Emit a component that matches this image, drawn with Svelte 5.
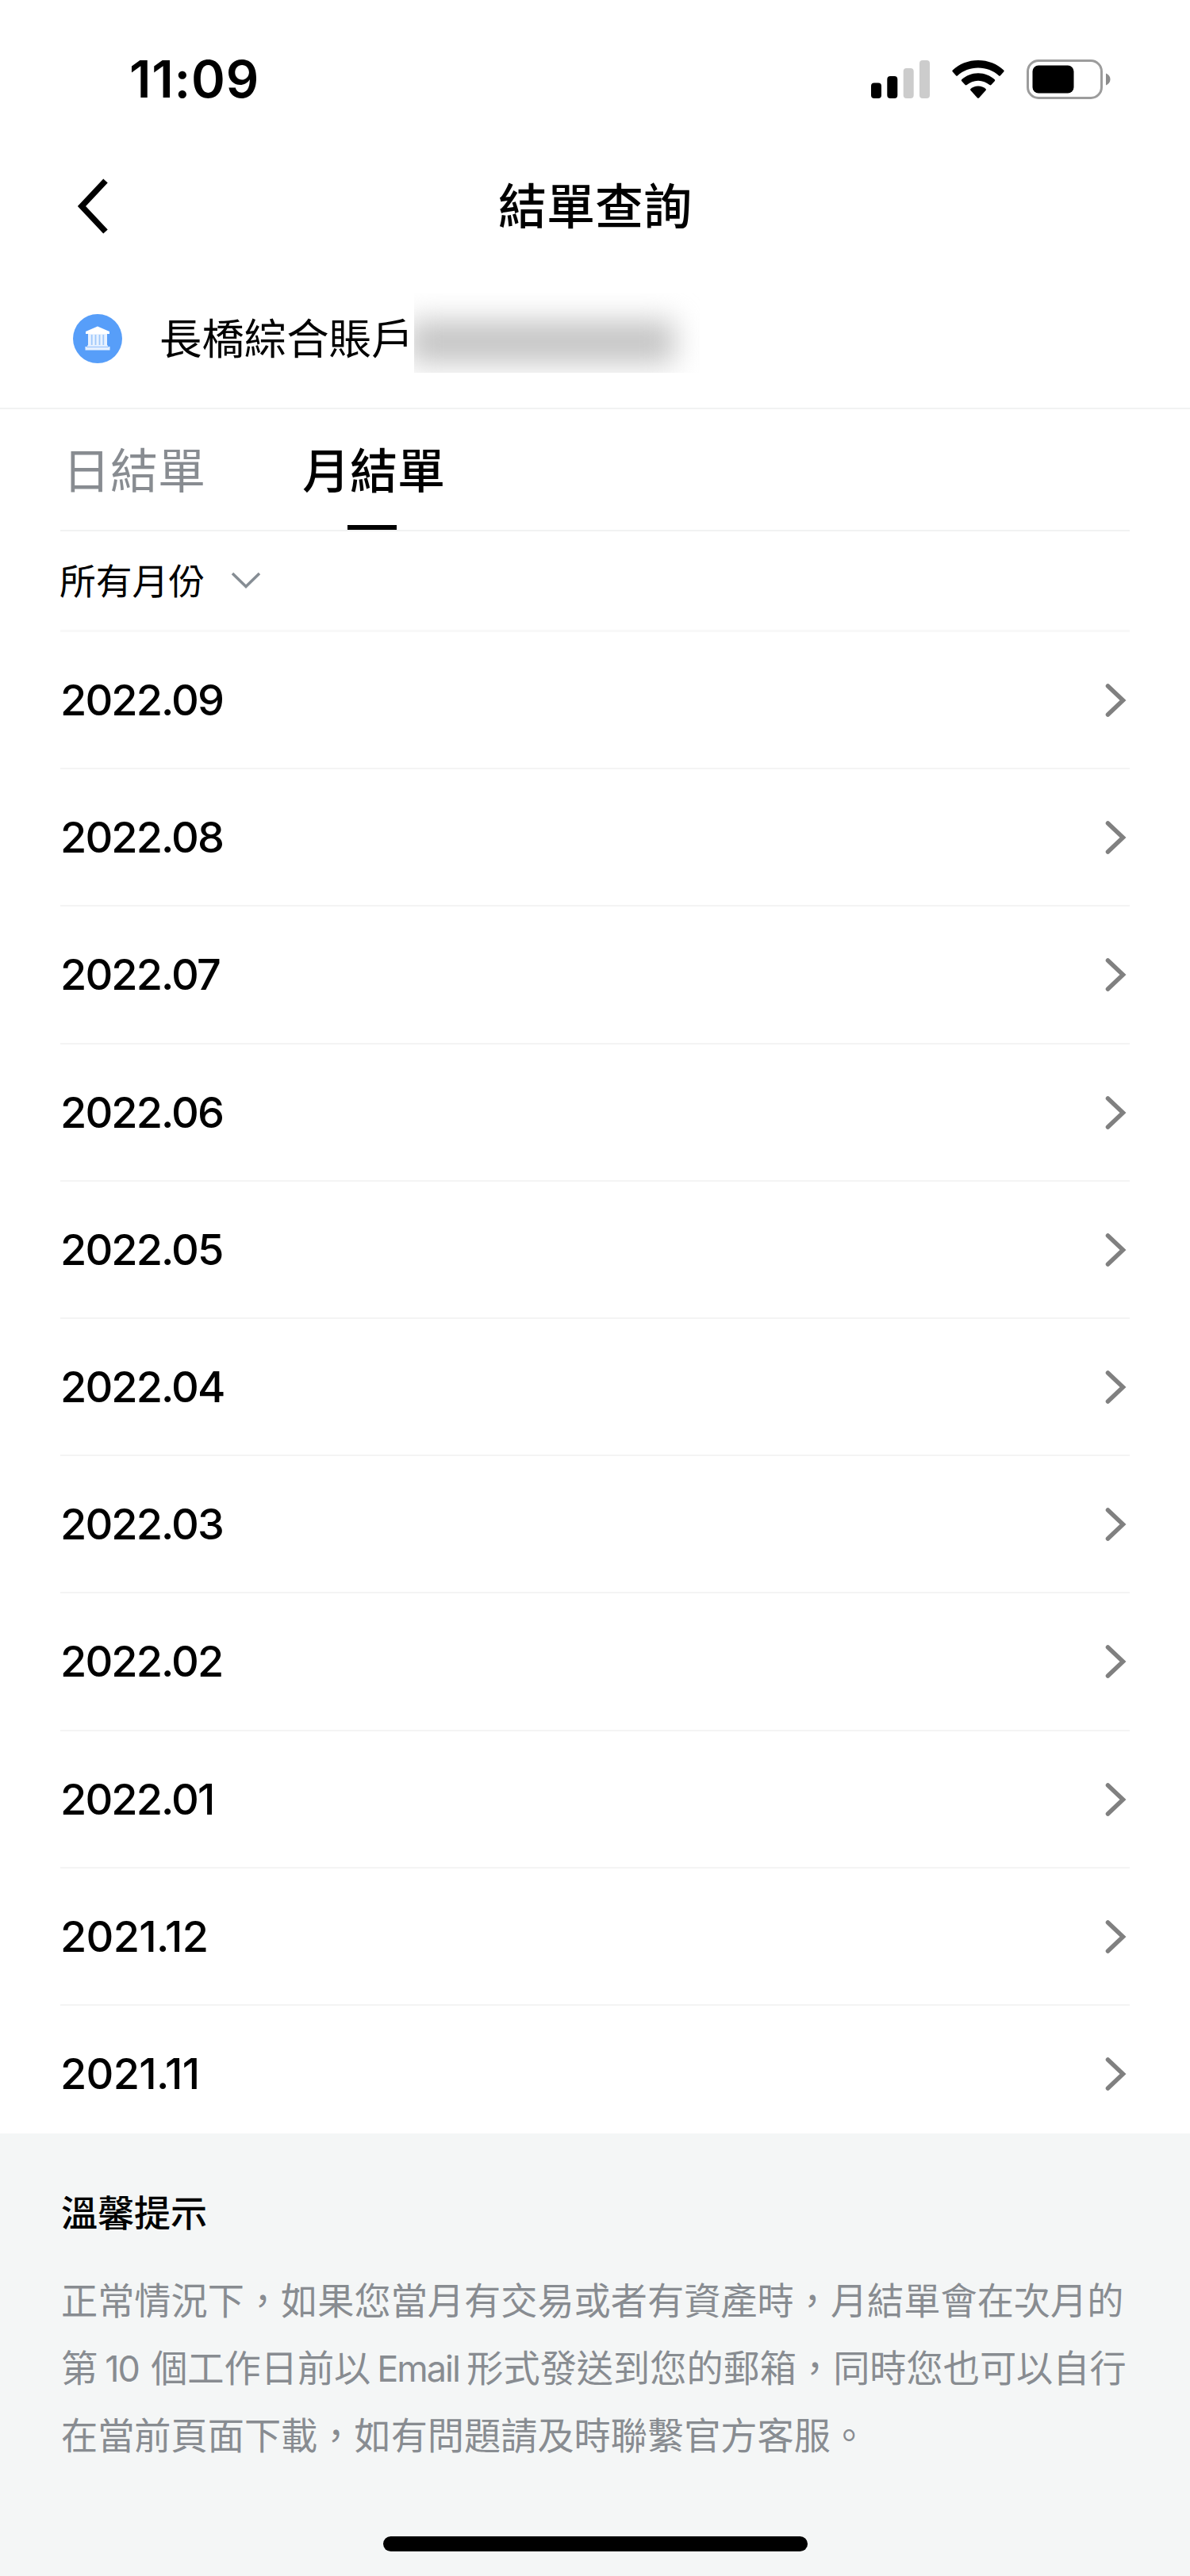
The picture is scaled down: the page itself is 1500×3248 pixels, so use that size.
<script>
  const months = [
    '2022.09', '2022.08', '2022.07', '2022.06', '2022.05', '2022.04',
    '2022.03', '2022.02', '2022.01', '2021.12', '2021.11'
  ];
</script>

<div class="screen">
  <header class="status">
    <span class="time">11:09</span>
    <div class="indicators">
      <svg class="signal" width="75" height="48" viewBox="0 0 75 48">
        <rect x="0" y="28.5" width="13" height="19.5" rx="4" />
        <rect x="20.3" y="20" width="13" height="28" rx="4" />
        <rect class="off" x="40.7" y="10" width="13" height="38" rx="4" />
        <rect class="off" x="61" y="0" width="13" height="48" rx="4" />
      </svg>
      <svg class="wifi" width="66" height="48" viewBox="0 0 66 48">
        <path d="M33 0C20.500 0 9 4.700 .8 12.400Q-.1 13.400 .8 14.400L5 19.300Q6 20.300 7.100 19.300C14 13 23 9.500 33 9.500S52 13 58.900 19.300Q60 20.300 61 19.300L65.200 14.400Q66.100 13.400 65.200 12.400C57 4.700 45.500 0 33 0Z" />
        <path d="M33 16.200C25 16.200 17.800 19.200 12.200 24.200Q11.300 25.200 12.200 26.200L16.600 31.100Q17.600 32 18.700 31.100C22.500 27.800 27.500 25.700 33 25.700S43.500 27.800 47.300 31.100Q48.400 32 49.400 31.100L53.800 26.200Q54.700 25.200 53.800 24.200C48.200 19.200 41 16.200 33 16.200Z" />
        <path d="M33 32.500C29.300 32.500 26 33.800 23.500 36Q22.600 37 23.500 38L31.800 47.200Q33 48.500 34.200 47.200L42.500 38Q43.400 37 42.500 36C40 33.800 36.700 32.500 33 32.500Z" />
      </svg>
      <svg class="battery" width="106" height="50" viewBox="0 0 106 50">
        <rect class="shell" x="1.500" y="1.500" width="93" height="47" rx="13.500" />
        <rect x="7.500" y="7.500" width="52" height="35" rx="7.500" />
        <path class="nub" d="M100 17.500C103.500 18.800 105.500 21.500 105.500 25S103.500 31.200 100 32.500Z" />
      </svg>
    </div>
  </header>

  <nav class="navbar">
    <svg class="back" width="44" height="72" viewBox="0 0 44 72">
      <path d="M38 4L8 36L38 68" />
    </svg>
    <h1>結單查詢</h1>
  </nav>

  <section class="account">
    <svg class="bank" width="62" height="62" viewBox="0 0 62 62">
      <circle cx="31" cy="31" r="31" />
      <path class="solid" d="M31 15.500L46 22V25H16V22Z" />
      <path class="pale" d="M19 25H43V40H19Z" />
      <path class="gap" d="M23.700 26V39M28.500 26V39M33.500 26V39M38.300 26V39" />
      <path class="pale" d="M18 39.500H44V41H46.500V45.500H15.500V41H18Z" />
      <path class="foot" d="M17 41.500H45" />
    </svg>
    <span class="account-name">長橋綜合賬戶</span>
    <span class="mask"></span>
  </section>

  <div class="tabs">
    <span class="tab">日結單</span>
    <span class="tab active">月結單</span>
  </div>

  <div class="filter">
    <span>所有月份</span>
    <svg width="38" height="24" viewBox="0 0 38 24">
      <path d="M2 3L19 19.500L36 3" />
    </svg>
  </div>

  <ul class="months">
    {#each months as month}
      <li class:narrow={month.startsWith('2021')}>
        <span>{month}</span>
        <svg width="30" height="46" viewBox="0 0 30 46">
          <path d="M4.500 5L23.500 23L4.500 41" />
        </svg>
      </li>
    {/each}
  </ul>

  <footer class="notice">
    <h2>溫馨提示</h2>
    <p>
      <span class="line">正常情況下，如果您當月有交易或者有資產時，月結單會在次月的</span>
      <span class="line">第<span class="latin ten">10</span>個工作日前以<span class="latin email">Email</span>形式發送到您的郵箱，同時您也可以自行</span>
      <span class="line">在當前頁面下載，如有問題請及時聯繫官方客服。</span>
    </p>
    <div class="home"></div>
  </footer>
</div>

<style>
  :global(body) {
    margin: 0;
    background: #fff;
  }

  .screen {
    display: flex;
    flex-direction: column;
    width: 1500px;
    height: 3248px;
    overflow: hidden;
    background: #fff;
    color: #000;
    font-family: "Noto Sans CJK TC", sans-serif;
  }

  .screen :is(h1, h2, p, ul) {
    margin: 0;
    padding: 0;
  }

  .status {
    display: flex;
    align-items: center;
    justify-content: space-between;
    height: 200px;
    box-sizing: border-box;
    padding: 0 100px 0 163px;
  }

  .time {
    font: 600 65px/80px Inter, sans-serif;
    letter-spacing: 0.8px;
  }

  .indicators {
    display: flex;
    align-items: center;
  }

  .wifi {
    margin: 0 28px 0 27px;
  }

  .off {
    fill: #ccc;
  }

  .shell {
    fill: none;
    stroke: #9c9c9c;
    stroke-width: 3;
  }

  .nub {
    fill: #8c8c8c;
  }

  .navbar {
    display: grid;
    grid-template-columns: 200px 1fr 200px;
    align-items: center;
    height: 114px;
  }

  .back {
    margin: 5px 0 0 95px;
  }

  .back path {
    fill: none;
    stroke: #000;
    stroke-width: 7.5;
  }

  h1 {
    text-align: center;
    font-size: 61px;
    line-height: 80px;
    font-weight: 500;
  }

  .account {
    display: flex;
    align-items: center;
    height: 202px;
    box-sizing: border-box;
    padding: 26px 0 0 92px;
    border-bottom: 2px solid #f1f2f2;
  }

  .bank circle {
    fill: #579ef9;
  }

  .solid {
    fill: #fff;
  }

  .pale {
    fill: #e8f2ff;
  }

  .gap {
    stroke: #9fc8fb;
    stroke-width: 1.8;
  }

  .foot {
    stroke: #a5cbfc;
    stroke-width: 1.5;
  }

  .account-name {
    margin: 0 0 6px 47px;
    width: 321px;
    font-size: 53.4px;
    line-height: 70px;
    white-space: nowrap;
  }

  .mask {
    width: 360px;
    height: 100px;
    margin-top: -14px;
    overflow: hidden;
  }

  .mask::before {
    content: "";
    display: block;
    width: 334px;
    height: 54px;
    margin: 34px 0 0 -6px;
    background: #c4c4c4;
    filter: blur(18px);
  }

  .tabs {
    display: flex;
    gap: 122px;
    height: 154px;
    box-sizing: border-box;
    margin: 0 76px;
    padding-left: 3px;
    border-bottom: 2px solid #f1f2f2;
  }

  .tab {
    position: relative;
    height: 152px;
    font-size: 60px;
    line-height: 148px;
    color: #888c91;
  }

  .active {
    color: #000;
    font-weight: 500;
  }

  .active::after {
    content: "";
    position: absolute;
    left: 57px;
    bottom: 0;
    width: 62px;
    height: 6px;
    background: #000;
  }

  .filter {
    display: flex;
    align-items: center;
    gap: 33px;
    height: 127px;
    box-sizing: border-box;
    margin: 0 76px;
    border-bottom: 3px solid #f8f8f8;
    font-size: 45.8px;
    line-height: 60px;
  }

  .filter span {
    margin-bottom: 4px;
    margin-left: -1px;
  }

  .filter path {
    fill: none;
    stroke: #868d94;
    stroke-width: 3.5;
  }

  .months {
    height: 1893px;
    overflow: hidden;
    list-style: none;
  }

  .months li {
    display: flex;
    align-items: center;
    justify-content: space-between;
    height: 173.2px;
    box-sizing: border-box;
    margin: 0 76px;
    padding: 1px 2px 0 0;
    border-bottom: 2px solid #f4f4f4;
    font: 500 54px/70px Inter, sans-serif;
    letter-spacing: -1.9px;
  }

  .months .narrow {
    letter-spacing: -0.7px;
  }

  .months path {
    fill: none;
    stroke: #808080;
    stroke-width: 5.5;
    stroke-linecap: round;
  }

  .notice {
    display: flex;
    flex-direction: column;
    flex: 1;
    padding: 64px 0 0 77px;
    background: #f4f6f6;
  }

  h2 {
    font-size: 46px;
    line-height: 66px;
    font-weight: 500;
  }

  .notice p {
    padding-top: 35px;
    color: #888c91;
    font-size: 46.2px;
    line-height: 85px;
  }

  .line {
    display: block;
    height: 85px;
    white-space: nowrap;
  }

  .latin {
    display: inline-block;
    font-family: Inter, sans-serif;
    font-size: 45px;
    line-height: 60px;
    letter-spacing: -2px;
  }

  .ten {
    width: 58px;
    margin-left: 9px;
  }

  .email {
    width: 113px;
    margin-left: 8px;
  }

  .home {
    width: 535px;
    height: 19px;
    margin: 88px 0 0 406px;
    border-radius: 10px;
    background: #000;
  }
</style>
